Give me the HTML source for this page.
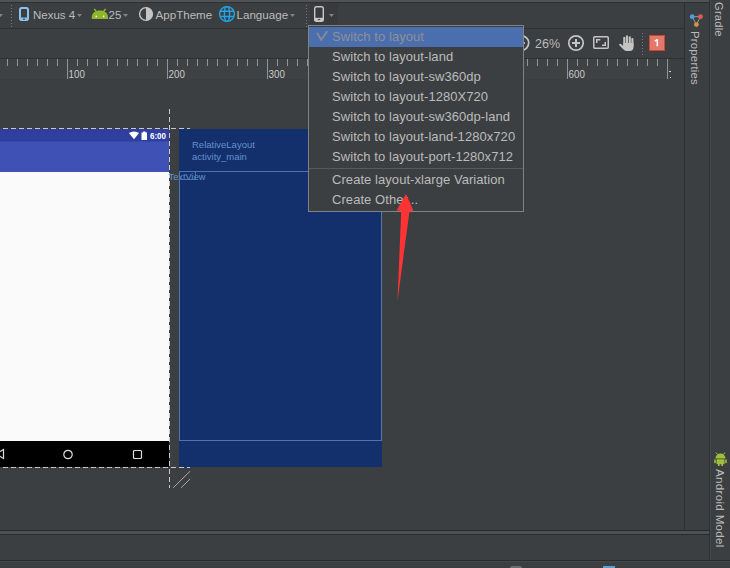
<!DOCTYPE html>
<html><head><meta charset="utf-8">
<style>
*{margin:0;padding:0;box-sizing:border-box}
html,body{width:730px;height:568px;overflow:hidden;background:#3c3f41;font-family:"Liberation Sans",sans-serif;color:#bbbbbb}
div,span,svg{position:absolute}
.hl{height:1px;background:#2e3032}
.vl{width:1px;background:#2e3032}
.t{white-space:nowrap;font-size:12px;line-height:14px}
.dotv{width:1px;background:repeating-linear-gradient(to bottom,#75787b 0 1px,transparent 1px 3px)}
.mi{left:332px;font-size:13px;line-height:16px;letter-spacing:0.06px;white-space:nowrap;color:#bbbbbb}
.tick{width:1px;background:#929598}
.rl{top:70px;font-size:9.8px;line-height:10px;transform:scaleY(1.12);transform-origin:0 100%;color:#c8c8c8;white-space:nowrap}
.bp{color:#6390cc;font-size:9.5px;line-height:11px;white-space:nowrap}
</style></head><body>
<!-- top strip -->
<div style="left:0;top:0;width:709px;height:2px;background:#4f5356"></div>
<div class="hl" style="left:0;top:2px;width:709px"></div>

<!-- toolbar 1 -->
<svg style="left:0;top:0" width="340" height="28" viewBox="0 0 340 28">
  <g fill="#818487">
   <path d="M-2 14 H3 L0.5 17 Z"/>
   <path d="M77 14 H82 L79.5 17 Z"/>
   <path d="M123 14 H128 L125.5 17 Z"/>
   <path d="M290 14 H295 L292.5 17 Z"/>
  </g>
</svg>
<div class="dotv" style="left:11px;top:5px;height:22px"></div>
<svg style="left:19px;top:7px" width="10" height="14" viewBox="0 0 10 14">
  <rect x="1" y="1" width="8" height="12" rx="1.8" fill="none" stroke="#8ac2ef" stroke-width="2"/>
  <rect x="1" y="10.5" width="8" height="2.5" fill="#8ac2ef"/>
  <ellipse cx="5" cy="12.1" rx="1.4" ry="0.6" fill="#3c3f41"/>
</svg>
<span class="t" style="left:33px;top:8px;font-size:11.5px">Nexus 4</span>
<svg style="left:90px;top:7px" width="20" height="14" viewBox="90 7 20 14">
  <path d="M91.8 18.9 V17.2 C91.8 12.6 95.5 10.4 99.9 10.4 C104.3 10.4 108 12.6 108 17.2 V18.9 Z" fill="#8fb52a"/>
  <path d="M94.2 8.9 L96.4 11.8 M105.6 8.9 L103.4 11.8" stroke="#8fb52a" stroke-width="1.5"/>
  <circle cx="96.3" cy="16.4" r="0.85" fill="#f4f4e8"/>
  <circle cx="103.6" cy="16.4" r="0.85" fill="#f4f4e8"/>
</svg>
<span class="t" style="left:108.5px;top:8px;font-size:11.5px">25</span>
<svg style="left:136px;top:4px" width="20" height="20" viewBox="136 4 20 20">
  <circle cx="146" cy="14" r="6.4" fill="none" stroke="#c4c4c4" stroke-width="1.4"/>
  <path d="M146 7.5 A6.5 6.5 0 0 1 146 20.5 Z" fill="#c4c4c4"/>
</svg>
<span class="t" style="left:155.5px;top:8px;font-size:11.6px">AppTheme</span>
<svg style="left:218px;top:5px" width="18" height="18" viewBox="218 5 18 18">
  <g fill="none" stroke="#22a5e6" stroke-width="1.4">
  <circle cx="227" cy="14" r="7.4"/>
  <ellipse cx="227" cy="14" rx="2.6" ry="7.4"/>
  <path d="M220 11.3 H234 M220 16.5 H234"/>
  </g>
</svg>
<span class="t" style="left:236.5px;top:8px;font-size:11.6px">Language</span>
<div class="dotv" style="left:306px;top:5px;height:22px"></div>
<div style="left:310px;top:3px;width:28px;height:22px;background:#383a3c"></div>
<svg style="left:314px;top:6px" width="10" height="16" viewBox="0 0 10 16">
  <rect x="0.7" y="0.7" width="8.6" height="14.6" rx="1.6" fill="none" stroke="#c8c8c8" stroke-width="1.4"/>
  <rect x="1" y="11.8" width="8" height="3.4" fill="#c8c8c8"/>
  <ellipse cx="5" cy="13.6" rx="1.4" ry="0.6" fill="#3c3f41"/>
</svg>
<svg style="left:328px;top:13px" width="8" height="6" viewBox="328 13 8 6"><path d="M329 14 H334 L331.5 17 Z" fill="#818487"/></svg>
<div class="hl" style="left:0;top:28px;width:684px"></div>

<!-- toolbar 2 zoom controls -->
<svg style="left:510px;top:32px" width="130" height="22" viewBox="510 32 130 22">
  <g fill="none" stroke="#c4c4c4" stroke-width="1.7">
   <circle cx="521.5" cy="43" r="7.2"/>
   <path d="M518 43 H525"/>
   <circle cx="576" cy="43" r="7.2"/>
   <path d="M572 43 H580 M576 39 V47" stroke-width="2"/>
   <rect x="593.75" y="36.75" width="14.5" height="11.5" rx="1" stroke-width="1.5"/>
   <path d="M596.75 43 V39.75 H600.3 M605.25 42 V45.25 H602" stroke-width="1.5"/>
  </g>
  <g stroke="#c4c4c4" stroke-width="2.1" stroke-linecap="round">
   <path d="M624.3 37.9 V45 M627 36.2 V45 M629.8 37.3 V45 M632.4 39 V46"/>
  </g>
  <path d="M623.2 43 H633.5 V47 Q633.5 51 629.5 51 H627 Q625 51 623.5 49.5 L619.6 45.6 Q618.6 44.6 619.5 44 Q620.5 43.4 621.5 44.4 L623.2 46 Z" fill="#c4c4c4"/>
</svg>
<span class="t" style="left:535px;top:37px;font-size:12.5px">26%</span>
<div class="dotv" style="left:642px;top:33px;height:22px"></div>
<div style="left:649px;top:35px;width:16px;height:16px;background:#e4786a;border:1px solid #cc4630"></div>
<svg style="left:649px;top:35px" width="16" height="16" viewBox="649 35 16 16"><path d="M657.3 39.3 V46.3 M657.3 39.5 L654.8 41.2" stroke="#fff" stroke-width="1.5" fill="none"/></svg>
<div class="hl" style="left:0;top:58px;width:684px"></div>

<!-- ruler -->
<div style="left:0;top:59px;width:671px;height:20px;background:#3f4244"></div>
<div style="left:0;top:0"><div class="tick" style="left:7px;top:59px;height:7px"></div><div class="tick" style="left:17px;top:59px;height:7px"></div><div class="tick" style="left:27px;top:59px;height:7px"></div><div class="tick" style="left:37px;top:59px;height:7px"></div><div class="tick" style="left:47px;top:59px;height:7px"></div><div class="tick" style="left:57px;top:59px;height:7px"></div><div class="tick" style="left:67px;top:59px;height:20px"></div><div class="tick" style="left:77px;top:59px;height:7px"></div><div class="tick" style="left:87px;top:59px;height:7px"></div><div class="tick" style="left:97px;top:59px;height:7px"></div><div class="tick" style="left:107px;top:59px;height:7px"></div><div class="tick" style="left:117px;top:59px;height:7px"></div><div class="tick" style="left:127px;top:59px;height:7px"></div><div class="tick" style="left:137px;top:59px;height:7px"></div><div class="tick" style="left:147px;top:59px;height:7px"></div><div class="tick" style="left:157px;top:59px;height:7px"></div><div class="tick" style="left:167px;top:59px;height:20px"></div><div class="tick" style="left:177px;top:59px;height:7px"></div><div class="tick" style="left:187px;top:59px;height:7px"></div><div class="tick" style="left:197px;top:59px;height:7px"></div><div class="tick" style="left:207px;top:59px;height:7px"></div><div class="tick" style="left:217px;top:59px;height:7px"></div><div class="tick" style="left:227px;top:59px;height:7px"></div><div class="tick" style="left:237px;top:59px;height:7px"></div><div class="tick" style="left:247px;top:59px;height:7px"></div><div class="tick" style="left:257px;top:59px;height:7px"></div><div class="tick" style="left:267px;top:59px;height:20px"></div><div class="tick" style="left:277px;top:59px;height:7px"></div><div class="tick" style="left:287px;top:59px;height:7px"></div><div class="tick" style="left:297px;top:59px;height:7px"></div><div class="tick" style="left:307px;top:59px;height:7px"></div><div class="tick" style="left:317px;top:59px;height:7px"></div><div class="tick" style="left:327px;top:59px;height:7px"></div><div class="tick" style="left:337px;top:59px;height:7px"></div><div class="tick" style="left:347px;top:59px;height:7px"></div><div class="tick" style="left:357px;top:59px;height:7px"></div><div class="tick" style="left:367px;top:59px;height:20px"></div><div class="tick" style="left:377px;top:59px;height:7px"></div><div class="tick" style="left:387px;top:59px;height:7px"></div><div class="tick" style="left:397px;top:59px;height:7px"></div><div class="tick" style="left:407px;top:59px;height:7px"></div><div class="tick" style="left:417px;top:59px;height:7px"></div><div class="tick" style="left:427px;top:59px;height:7px"></div><div class="tick" style="left:437px;top:59px;height:7px"></div><div class="tick" style="left:447px;top:59px;height:7px"></div><div class="tick" style="left:457px;top:59px;height:7px"></div><div class="tick" style="left:467px;top:59px;height:20px"></div><div class="tick" style="left:477px;top:59px;height:7px"></div><div class="tick" style="left:487px;top:59px;height:7px"></div><div class="tick" style="left:497px;top:59px;height:7px"></div><div class="tick" style="left:507px;top:59px;height:7px"></div><div class="tick" style="left:517px;top:59px;height:7px"></div><div class="tick" style="left:527px;top:59px;height:7px"></div><div class="tick" style="left:537px;top:59px;height:7px"></div><div class="tick" style="left:547px;top:59px;height:7px"></div><div class="tick" style="left:557px;top:59px;height:7px"></div><div class="tick" style="left:567px;top:59px;height:20px"></div><div class="tick" style="left:577px;top:59px;height:7px"></div><div class="tick" style="left:587px;top:59px;height:7px"></div><div class="tick" style="left:597px;top:59px;height:7px"></div><div class="tick" style="left:607px;top:59px;height:7px"></div><div class="tick" style="left:617px;top:59px;height:7px"></div><div class="tick" style="left:627px;top:59px;height:7px"></div><div class="tick" style="left:637px;top:59px;height:7px"></div><div class="tick" style="left:647px;top:59px;height:7px"></div><div class="tick" style="left:657px;top:59px;height:7px"></div><div class="tick" style="left:667px;top:59px;height:20px"></div><span class="rl" style="left:68.5px">100</span><span class="rl" style="left:168.5px">200</span><span class="rl" style="left:268.5px">300</span><span class="rl" style="left:568.5px">600</span></div>
<div style="left:669px;top:71px;width:2px;height:1px;background:#d0d0d0"></div>
<div style="left:670px;top:77px;width:1px;height:1px;background:#d0d0d0"></div>

<!-- phone preview -->
<div style="left:0;top:129px;width:169px;height:12px;background:#303f9f"></div>
<div style="left:0;top:141px;width:169px;height:1px;background:#3848aa"></div>
<div style="left:0;top:142px;width:169px;height:30px;background:#3f51b5"></div>
<div style="left:0;top:172px;width:169px;height:269px;background:#fafafa"></div>
<div style="left:0;top:441px;width:169px;height:26px;background:#000"></div>
<svg style="left:128px;top:131px" width="12" height="9" viewBox="128 131 12 9"><path d="M128.9 133 Q134 129.9 139.1 133 L134 139.2 Z" fill="#fff"/></svg>
<svg style="left:140px;top:130px" width="9" height="11" viewBox="140 130 9 11"><path d="M141.5 132.4 H143 V131.6 H145.5 V132.4 H147 V139.9 H141.5 Z" fill="#fff"/></svg>
<span class="t" style="left:150px;top:133px;font-size:8px;line-height:8px;color:#fff;font-weight:bold;transform:scaleY(1.2);transform-origin:0 85%">6:00</span>
<svg style="left:0;top:448px" width="6" height="12" viewBox="0 0 6 12"><path d="M3.5 1.5 L-4 6 L3.5 10.5 Z" fill="none" stroke="#ddd" stroke-width="1.2"/></svg>
<svg style="left:62px;top:449px" width="12" height="12" viewBox="0 0 12 12"><circle cx="6" cy="5.5" r="4.2" fill="none" stroke="#ddd" stroke-width="1.2"/></svg>
<svg style="left:132px;top:449px" width="11" height="11" viewBox="0 0 11 11"><rect x="1.5" y="1.5" width="8" height="8" rx="1" fill="none" stroke="#ddd" stroke-width="1.2"/></svg>

<!-- dashed lines -->
<div style="left:169px;top:109px;width:1px;height:379px;background:repeating-linear-gradient(to bottom,#c8c8c8 0 5px,transparent 5px 8px)"></div>
<div style="left:3px;top:128px;width:187px;height:1px;background:repeating-linear-gradient(to right,#c8c8c8 0 5px,transparent 5px 8px)"></div>
<div style="left:3px;top:467px;width:187px;height:1px;background:repeating-linear-gradient(to right,#c8c8c8 0 5px,transparent 5px 8px)"></div>
<svg style="left:170px;top:468px" width="22" height="22" viewBox="170 468 22 22">
  <path d="M173.2 487.8 L190.1 471.2 M181.1 487.8 L190.1 479" stroke="#a8a8a8" stroke-width="1"/>
</svg>

<!-- blueprint -->
<div style="left:179px;top:129px;width:203px;height:338px;background:#13306c"></div>
<div style="left:179px;top:171px;width:203px;height:270px;border:1px solid #4d76b0;border-right-color:#557ba6"></div>
<span class="bp" style="left:192px;top:139px">RelativeLayout</span>
<span class="bp" style="left:192px;top:151px">activity_main</span>
<span class="bp" style="left:168.5px;top:172px;font-size:9.3px">TextView</span>
<div style="left:179px;top:171px;width:17px;height:9px;border:1px solid #4d76b0"></div>

<!-- menu -->
<div style="left:308px;top:25px;width:216px;height:187px;background:#3c3f41;border:1px solid #808285"></div>
<div style="left:309px;top:27px;width:214px;height:20px;background:#4b6eaf"></div>
<svg style="left:315px;top:29px" width="14" height="14" viewBox="315 29 14 14"><path d="M317.2 32.8 L321.2 40 L327.2 31.2" fill="none" stroke="#8c8e91" stroke-width="1.7"/></svg>
<span class="mi" style="top:29px;color:#8e9196">Switch to layout</span>
<span class="mi" style="top:49px">Switch to layout-land</span>
<span class="mi" style="top:69px">Switch to layout-sw360dp</span>
<span class="mi" style="top:89px">Switch to layout-1280X720</span>
<span class="mi" style="top:109px">Switch to layout-sw360dp-land</span>
<span class="mi" style="top:129px">Switch to layout-land-1280x720</span>
<span class="mi" style="top:149px">Switch to layout-port-1280x712</span>
<div style="left:309px;top:168px;width:214px;height:1px;background:#57595b"></div>
<span class="mi" style="top:172px">Create layout-xlarge Variation</span>
<span class="mi" style="top:192px">Create Other...</span>

<!-- red arrow -->
<svg style="left:390px;top:190px" width="30" height="115" viewBox="390 190 30 115">
  <path d="M406 194 L413.5 211 L409.5 211 L397.5 301 L401.2 211 L396.5 210.5 Z" fill="#ff3333"/>
</svg>

<!-- bottom lines -->
<div class="hl" style="left:0;top:530px;width:709px;background:#292b2c"></div>
<div style="left:0;top:531px;width:709px;height:3px;background:#4c5154"></div>
<div class="hl" style="left:0;top:534px;width:709px;background:#292b2c"></div>
<div class="hl" style="left:0;top:560px;width:730px;background:#292b2c"></div>
<div style="left:0;top:561px;width:730px;height:1px;background:#45494b"></div>
<div style="left:510px;top:566px;width:12px;height:4px;background:#6b6e71;border-radius:2px"></div>
<div style="left:603px;top:566px;width:12px;height:2px;background:#5a9fd6"></div>

<!-- right panels -->
<div class="vl" style="left:684px;top:3px;height:527px"></div>
<div class="vl" style="left:709px;top:0;height:560px"></div>
<div style="left:710px;top:0;width:1px;height:560px;background:#45494b"></div>
<svg style="left:689px;top:13px" width="15" height="15" viewBox="0 0 15 15">
  <path d="M3.2 3.7 L11.5 3.7 L7.4 11.6 Z" fill="none" stroke="#b0b0b0" stroke-width="0.8"/>
  <circle cx="3.2" cy="3.7" r="2.4" fill="#4a9ee0"/>
  <circle cx="11.5" cy="3.7" r="2.4" fill="#e05a5a"/>
  <circle cx="7.4" cy="11.6" r="2.4" fill="#d49440"/>
</svg>
<span class="t" style="left:701.5px;top:30.8px;font-size:11.3px;letter-spacing:0.25px;transform-origin:0 0;transform:rotate(90deg)">Properties</span>
<span class="t" style="left:725.5px;top:1.8px;font-size:11.2px;letter-spacing:0.2px;transform-origin:0 0;transform:rotate(90deg)">Gradle</span>
<svg style="left:714px;top:452px" width="13" height="14" viewBox="0 0 13 14">
  <path d="M1.5 6.5 A5 5 0 0 1 11.5 6.5 Z" fill="#9ec03a"/>
  <path d="M3.5 2.5 L2 0.5 M9.5 2.5 L11 0.5" stroke="#9ec03a" stroke-width="1"/>
  <rect x="2.5" y="7.2" width="8" height="5" rx="0.6" fill="#9ec03a"/>
  <rect x="0.2" y="7.2" width="1.6" height="4" rx="0.8" fill="#9ec03a"/>
  <rect x="11.2" y="7.2" width="1.6" height="4" rx="0.8" fill="#9ec03a"/>
  <rect x="4" y="11.5" width="1.6" height="2.5" fill="#9ec03a"/>
  <rect x="7.4" y="11.5" width="1.6" height="2.5" fill="#9ec03a"/>
</svg>
<span class="t" style="left:727px;top:468.5px;font-size:11.5px;letter-spacing:0.35px;transform-origin:0 0;transform:rotate(90deg)">Android Model</span>
</body></html>
